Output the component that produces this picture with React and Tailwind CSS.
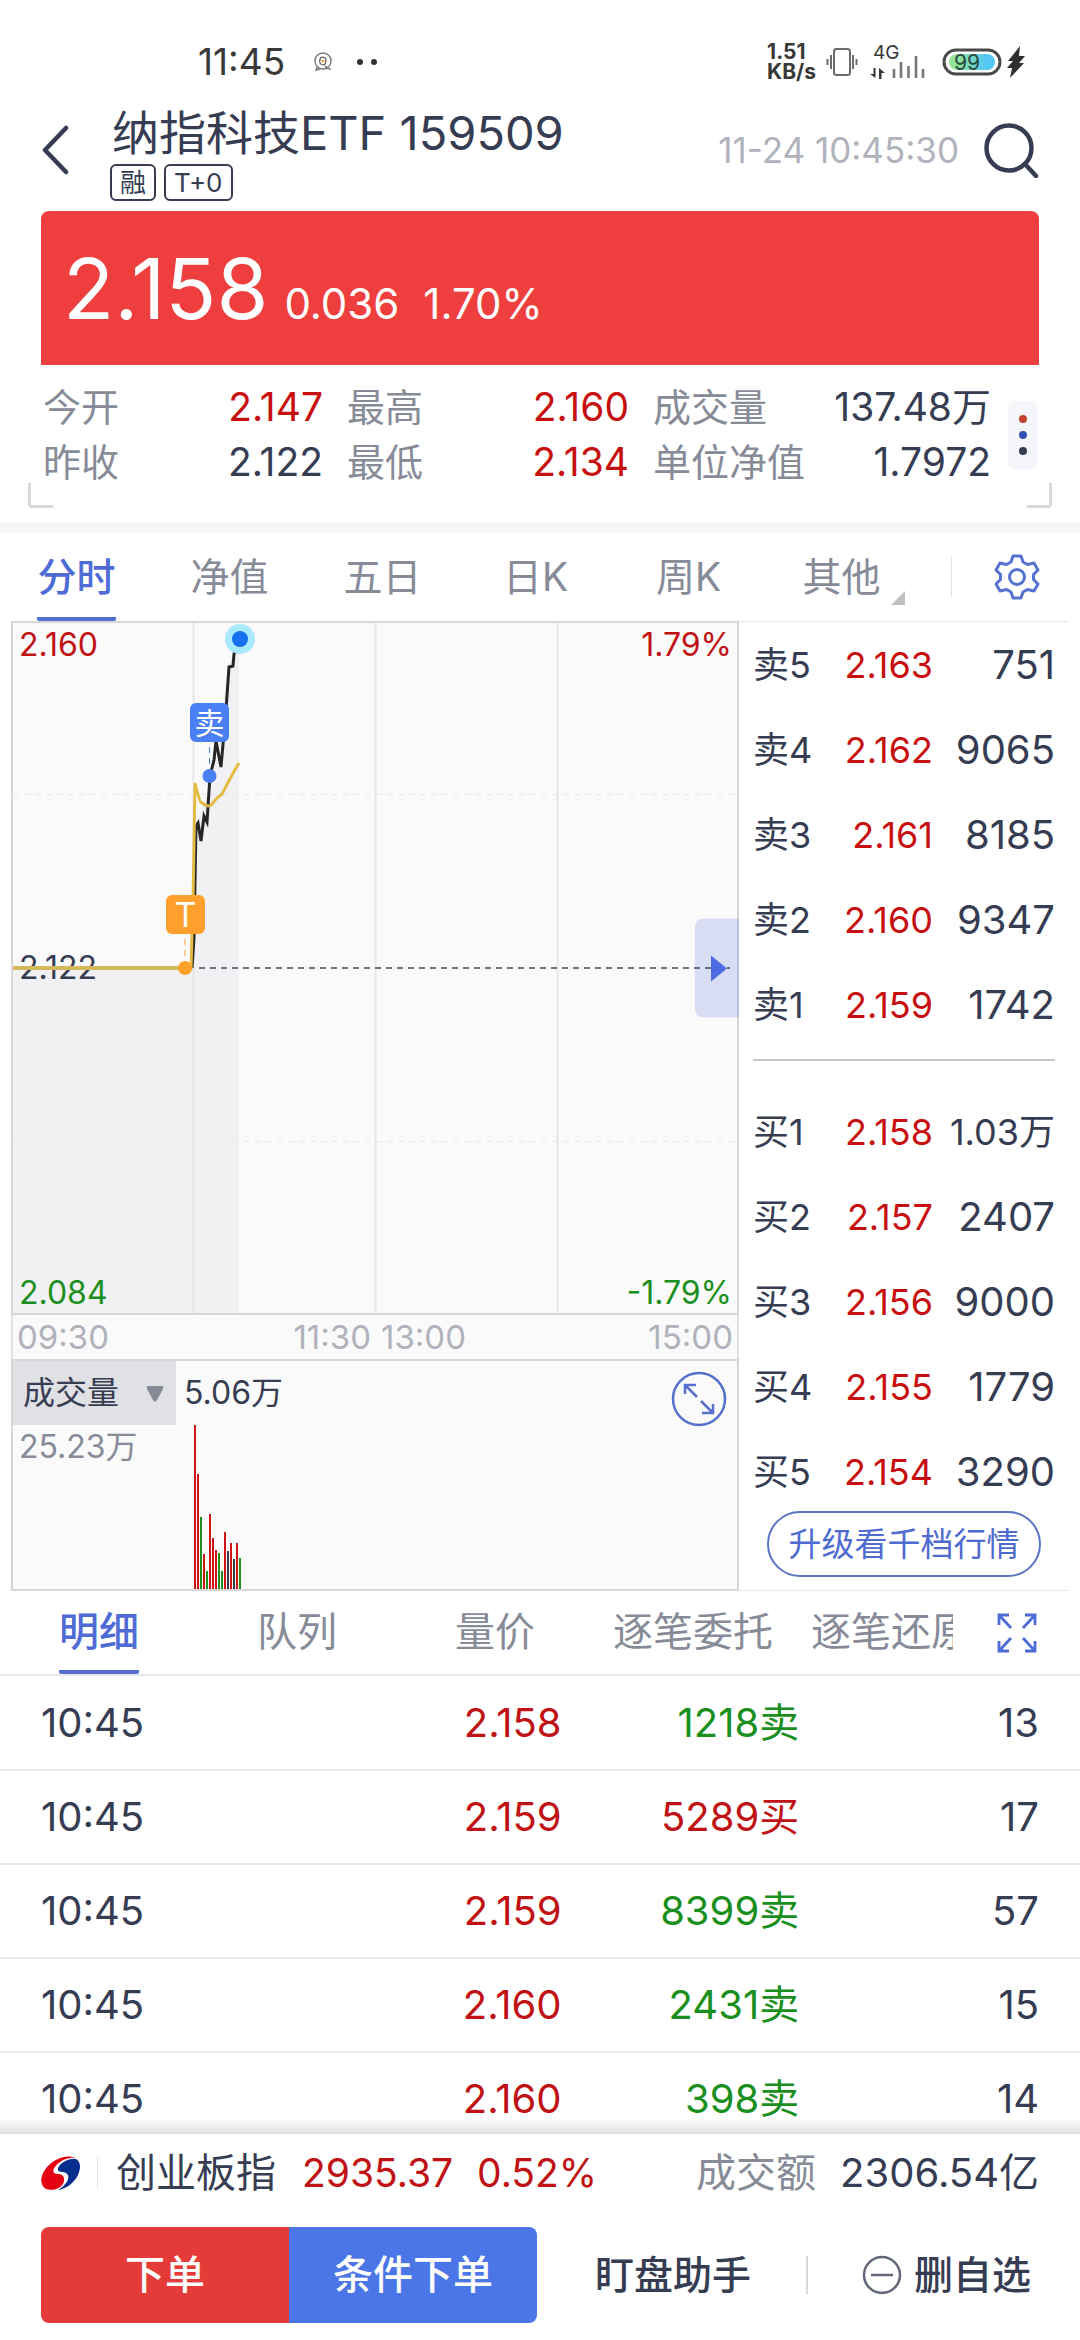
import React, { memo } from "react";

const stats = [
    { label: "今开", value: "2.147", tone: "text-[#c80f10]" },
    { label: "最高", value: "2.160", tone: "text-[#c80f10]" },
    { label: "成交量", value: "137.48万", tone: "text-[#363c52]" },
    { label: "昨收", value: "2.122", tone: "text-[#363c52]" },
    { label: "最低", value: "2.134", tone: "text-[#c80f10]" },
    { label: "单位净值", value: "1.7972", tone: "text-[#363c52]" },
];

const chartTabs = ["分时", "净值", "五日", "日K", "周K", "其他"];

const asks = [
    ["卖5", "2.163", "751"],
    ["卖4", "2.162", "9065"],
    ["卖3", "2.161", "8185"],
    ["卖2", "2.160", "9347"],
    ["卖1", "2.159", "1742"],
];

const bids = [
    ["买1", "2.158", "1.03万"],
    ["买2", "2.157", "2407"],
    ["买3", "2.156", "9000"],
    ["买4", "2.155", "1779"],
    ["买5", "2.154", "3290"],
];

const detailTabs = ["明细", "队列", "量价", "逐笔委托", "逐笔还原"];

const trades = [
    { time: "10:45", price: "2.158", deal: "1218卖", sell: true, count: 13 },
    { time: "10:45", price: "2.159", deal: "5289买", sell: false, count: 17 },
    { time: "10:45", price: "2.159", deal: "8399卖", sell: true, count: 57 },
    { time: "10:45", price: "2.160", deal: "2431卖", sell: true, count: 15 },
    { time: "10:45", price: "2.160", deal: "398卖", sell: true, count: 14 },
];

// [height, colour] for each minute
const volumes = [
    [164, "#d01515"],
    [115, "#d01515"],
    [72, "#1f8f1f"],
    [35, "#d01515"],
    [18, "#1f8f1f"],
    [75, "#d01515"],
    [51, "#d01515"],
    [39, "#d01515"],
    [36, "#1f8f1f"],
    [18, "#1f8f1f"],
    [57, "#d01515"],
    [38, "#363c52"],
    [46, "#d01515"],
    [30, "#363c52"],
    [46, "#d01515"],
    [31, "#1f8f1f"],
];

function StatusBar() {
    return (
        <div className="flex h-[100px] items-center justify-between pt-6 pr-[54px] pl-[198px] text-[#383838]">
            <div className="flex items-center">
                <span className="text-[37px] leading-10">11:45</span>
                <svg className="ml-7 h-5 w-5" viewBox="0 0 20 20" fill="none">
                    <circle cx="10" cy="9" r="8" stroke="#777" strokeWidth="1.4" />
                    <path d="M7 7c1-3 6-2 6 1s-1 5-3 5-4-2-3-6z" stroke="#555" strokeWidth="1.2" />
                    <circle cx="10" cy="9" r="1.5" fill="#e8a33c" />
                    <path d="M12 14c2 3 5 3 6 3M4 15l-1 3 4-1" stroke="#777" strokeWidth="1.4" />
                </svg>
                <svg className="ml-6 h-2 w-5" viewBox="0 0 20 8" fill="#333">
                    <circle cx="3" cy="4" r="3" />
                    <circle cx="17" cy="4" r="3" />
                </svg>
            </div>
            <div className="flex items-center">
                <div className="text-[21px] font-bold leading-5">
                    1.51
                    <br />
                    KB/s
                </div>
                <svg className="ml-[10px] h-[30px] w-8" viewBox="0 0 32 30" fill="none" stroke="#6b6b6b" strokeWidth="2">
                    <rect x="8" y="2" width="16" height="26" rx="2.5" />
                    <path d="M5 8v14M1.5 12v6M27 8v14M30.5 12v6" />
                </svg>
                <div className="relative ml-3 h-9 w-14">
                    <span className="absolute left-[3px] top-0 text-[19px] leading-[18px]">4G</span>
                    <svg className="absolute bottom-0 left-0 h-8 w-14" viewBox="0 0 56 32">
                        <path d="M5.500 20v10L0 26h3.500v-6zM9 31V20l6 5h-3.500v6z" fill="#333" />
                        <path d="M24 21v9M31 14v16M38.500 18v12M46 8v22M53 21v9" stroke="#777" strokeWidth="2.6" />
                    </svg>
                </div>
                <svg className="ml-4 h-7 w-[60px]" viewBox="0 0 60 28">
                    <defs>
                        <linearGradient id="battery">
                            <stop offset="0.2" stopColor="#93e29a" />
                            <stop offset="0.8" stopColor="#54c8f4" />
                        </linearGradient>
                    </defs>
                    <rect x="2" y="2" width="56" height="24" rx="12" fill="#fff" stroke="#4a4a4a" strokeWidth="3" />
                    <rect x="7" y="6" width="46" height="16" rx="8" fill="url(#battery)" />
                    <text x="12" y="21.500" fontSize="21" fill="#24483f" fontFamily="Inter">
                        99
                    </text>
                </svg>
                <svg className="ml-1 h-8 w-5" viewBox="0 0 20 32" fill="#2f2f2f">
                    <path d="M14 0 2 15h5L1 22h5L4 32 18 17h-5l6-7h-6z" />
                </svg>
            </div>
        </div>
    );
}

function Header() {
    return (
        <header className="flex h-[111px] items-start justify-between px-[41px]">
            <div className="flex items-start">
                <button type="button" aria-label="返回" className="mt-[25px]">
                    <svg
                        className="h-[50px] w-7"
                        viewBox="0 0 28 50"
                        fill="none"
                        stroke="#363c52"
                        strokeWidth="4.5"
                        strokeLinecap="round"
                        strokeLinejoin="round"
                    >
                        <path d="M25 3 4 25l21 22" />
                    </svg>
                </button>
                <div className="mt-[6px] ml-[41px] flex flex-col gap-1">
                    <h1 className="ml-[2px] text-[47px] leading-[54px] text-[#363c52]">纳指科技ETF 159509</h1>
                    <div className="flex gap-2 text-[26px] leading-[33px] text-[#363c52]">
                        <span className="rounded-md border-2 border-[#363c52] px-2">融</span>
                        <span className="rounded-md border-2 border-[#363c52] px-2">T+0</span>
                    </div>
                </div>
            </div>
            <div className="mt-[22px] flex items-center">
                <time className="text-[35px] leading-10 text-[#b0b2bc]">11-24 10:45:30</time>
                <button type="button" aria-label="搜索" className="ml-6">
                    <svg className="h-14 w-14" viewBox="0 0 56 56" fill="none" stroke="#363c52" strokeWidth="4.5">
                        <circle cx="26" cy="26" r="22.5" />
                        <path d="M42 42 53 54" strokeLinecap="round" />
                    </svg>
                </button>
            </div>
        </header>
    );
}

function Quote() {
    return (
        <section>
            <div className="mx-[41px] flex h-[154px] items-baseline rounded-t-lg bg-[#ee3f3e] pl-[22px] pt-[30px] text-white">
                <span className="text-[84px] leading-[96px]">2.158</span>
                <span className="ml-4 text-[42px]">0.036</span>
                <span className="ml-6 text-[42px]">1.70%</span>
            </div>
            <div className="flex h-[157px] flex-col justify-between px-7 pt-[15px] pb-[14px]">
                <div className="flex items-center justify-between pr-[14px] pl-[15px]">
                    <dl className="grid w-[948px] grid-cols-[280px_282px_1fr] gap-x-6">
                        {stats.map((s) => (
                            <div key={s.label} className="flex h-[55px] items-center justify-between">
                                <dt className="text-[38px] text-[#878b98]">{s.label}</dt>
                                <dd className={`text-[39px] ${s.tone}`}>{s.value}</dd>
                            </div>
                        ))}
                    </dl>
                    <button
                        type="button"
                        aria-label="更多"
                        className="flex h-[69px] w-[30px] flex-col items-center justify-center gap-2 rounded-lg bg-[#f5f6f9]"
                    >
                        <span className="h-2 w-2 rounded-full bg-[#c2432f]" />
                        <span className="h-2 w-2 rounded-full bg-[#3450b0]" />
                        <span className="h-2 w-2 rounded-full bg-[#363c52]" />
                    </button>
                </div>
                <div className="-mt-3 flex justify-between">
                    <span className="h-[25px] w-[25px] rounded-bl-sm border-b-3 border-l-3 border-[#d6d8de]" />
                    <span className="h-[25px] w-[25px] rounded-br-sm border-b-3 border-r-3 border-[#d6d8de]" />
                </div>
            </div>
        </section>
    );
}

function ChartTabs() {
    return (
        <nav className="flex h-[88px]">
            <div className="flex w-[85%] text-[39px] leading-[48px]">
                {chartTabs.map((tab, i) => (
                    <button
                        key={tab}
                        type="button"
                        className={`flex flex-1 justify-center ${i === 0 ? "font-medium text-[#4f6bd6]" : "text-[#878b98]"}`}
                    >
                        <span
                            className={`relative flex h-full items-center border-b-4 pt-[3px] ${i === 0 ? "rounded-b-xs border-[#526fcf]" : "border-transparent"}`}
                        >
                            {tab}
                            {i === 5 && (
                                <svg className="absolute -right-6 bottom-3 h-[14px] w-[14px]" viewBox="0 0 14 14" fill="#bfbfbf">
                                    <path d="M14 0v14H0z" />
                                </svg>
                            )}
                        </span>
                    </button>
                ))}
            </div>
            <div className="flex flex-1 items-center justify-end pr-10">
                <span className="h-10 w-px bg-[#e4e5e9]" />
                <button type="button" aria-label="设置" className="ml-[42px]">
                    <svg
                        className="h-[46px] w-[46px]"
                        viewBox="0 0 46 46"
                        fill="none"
                        stroke="#5673d2"
                        strokeWidth="3"
                        strokeLinejoin="round"
                    >
                        <path d="M19 2h8l2 6 4.500 2.500 6.500-1.500 4 7-4.500 4.500v5L44 30l-4 7-6.500-1.500L29 38l-2 6h-8l-2-6-4.500-2.500L6 37l-4-7 4.500-4.500v-5L2 16l4-7 6.500 1.500L17 8z" />
                        <circle cx="23" cy="23" r="7.5" />
                    </svg>
                </button>
            </div>
        </nav>
    );
}

function PriceChart() {
    return (
        <div className="relative border-2 border-[#d6d7da] bg-[#fafafa] text-[32px] leading-10">
            <svg className="block w-full" viewBox="0 0 724 690" fill="none">
                <path d="M0 345H180L184 200 200 150 215 44 226 16V690H0z" fill="#f1f1f4" />
                <path d="M180.500 0V690M362.500 0V690M544.500 0V690" stroke="#e6e6e8" strokeWidth="2" />
                <path d="M0 171.500H723M0 518.500H723" stroke="#e9e9eb" strokeDasharray="6 5" />
                <path d="M186 345H717" stroke="#6d7180" strokeWidth="2" strokeDasharray="6 5" />
            </svg>
            <span className="absolute left-[6px] top-[2px] text-[#c01214]">2.160</span>
            <span className="absolute right-[5px] top-[2px] text-[#c01214]">1.79%</span>
            <span className="absolute left-[6px] top-1/2 -translate-y-1/2 text-[#363c52]">2.122</span>
            <span className="absolute bottom-0 left-[6px] text-[#1a8f1d]">2.084</span>
            <span className="absolute bottom-0 right-[5px] text-[#1a8f1d]">-1.79%</span>
            <svg className="absolute inset-0 w-full" viewBox="0 0 724 690" fill="none">
                <path
                    d="M179 345 181 315 183 203 185 200 188 218 191 193 194 199 197 153 201 137 203 118 208 144 213 87 216 44 220 43 221 31 226 15"
                    stroke="#262626"
                    strokeWidth="3"
                />
                <path
                    d="M0 345H178L180 280 182 160C184 168 187 180 189 180 194 184 196 183 198 182L204 175 209 171 219 152 226 140"
                    stroke="#e2ba44"
                    strokeWidth="3"
                />
                <path d="M0 345H172" stroke="#d5b85c" strokeWidth="4" />
                <path d="M172 316V340" stroke="#ff9f2e" strokeDasharray="6 5" />
                <path d="M196.500 124V150" stroke="#4a7cf0" strokeDasharray="6 5" />
                <circle cx="172" cy="345" r="7" fill="#ff9f2c" />
                <circle cx="196.500" cy="153" r="7" fill="#4b7ff5" />
                <circle cx="227" cy="16" r="15" fill="#aae8fd" />
                <circle cx="227" cy="16" r="8" fill="#186ff0" />
            </svg>
            <span className="absolute left-[153px] top-[272px] flex h-[39px] w-[39px] items-center justify-center rounded-md bg-[#ff9f2c] text-[34px] text-white">
                T
            </span>
            <span className="absolute left-[177px] top-[80px] flex h-[39px] w-[39px] items-center justify-center rounded-md bg-[#4b7ff5] text-[30px] text-white">
                卖
            </span>
            <button
                type="button"
                aria-label="展开"
                className="absolute right-[-2px] top-1/2 flex h-[99px] w-11 -translate-y-1/2 items-center justify-center rounded-l-lg bg-[#4f6bd6]/20"
            >
                <svg className="ml-1 h-[30px] w-[18px]" viewBox="0 0 18 30" fill="#4e6ae0">
                    <path d="M1 2v26l16-13z" />
                </svg>
            </button>
        </div>
    );
}

function VolumeChart() {
    return (
        <div className="flex h-[232px] flex-col border-2 border-[#d6d7da] bg-[#fafafa]">
            <div className="flex h-16 items-center">
                <div className="relative h-full w-[163px]">
                    <select
                        aria-label="指标"
                        className="h-full w-full appearance-none bg-[#e0e1e5] pl-[10px] text-[32px] text-[#363c52]"
                    >
                        <option>成交量</option>
                    </select>
                    <svg
                        className="pointer-events-none absolute right-3 top-[25px] h-4 w-[18px]"
                        viewBox="0 0 18 16"
                        fill="#878b98"
                    >
                        <path d="M2 0h14q2 0 1 3l-6 11q-2 3-4 0L1 3Q0 0 2 0z" />
                    </svg>
                </div>
                <span className="ml-2 text-[32px] text-[#363c52]">5.06万</span>
                <button type="button" aria-label="全屏" className="mr-[10px] ml-auto mt-3">
                    <svg className="h-14 w-14" viewBox="0 0 56 56" fill="none" stroke="#5470cc" strokeWidth="2.5">
                        <circle cx="28" cy="28" r="26" />
                        <path d="M14 23V14h11M14.500 14.500 26 26M42 33v9H31M41.500 41.500 30 30" />
                    </svg>
                </button>
            </div>
            <div className="relative flex-1">
                <span className="absolute left-[6px] top-[2px] text-[32px] leading-10 text-[#878b98]">25.23万</span>
                <svg className="block w-full" viewBox="0 0 724 164">
                    {volumes.map(([h, color], i) => (
                        <rect key={i} x={181 + i * 3} y={164 - h} width="2" height={h} fill={color} />
                    ))}
                </svg>
            </div>
        </div>
    );
}

function BookSide({ rows, name }) {
    return (
        <table aria-label={name} className="w-full table-fixed text-[36px] text-[#363c52]">
            <colgroup>
                <col className="w-[62px]" />
                <col />
                <col className="w-[122px]" />
            </colgroup>
            <tbody>
                {rows.map(([label, price, qty]) => (
                    <tr key={label} className="h-[85px]">
                        <th scope="row" className="p-0 text-left font-normal whitespace-nowrap">
                            {label}
                        </th>
                        <td className="p-0 text-right text-[#c80f10]">{price}</td>
                        <td className={`p-0 text-right whitespace-nowrap ${qty.includes("万") ? "" : "text-[40px]"}`}>
                            {qty}
                        </td>
                    </tr>
                ))}
            </tbody>
        </table>
    );
}

function ChartPanel() {
    return (
        <section className="flex pl-[11px]">
            <div className="w-[728px] shrink-0">
                <PriceChart />
                <div className="grid h-11 grid-cols-4 items-center border-x-2 border-[#e0e1e4] bg-[#fafafa] px-1 text-[33px] leading-10 text-[#b0b2bb]">
                    <span>09:30</span>
                    <span className="pr-1 text-right">11:30</span>
                    <span className="pl-[6px]">13:00</span>
                    <span className="text-right">15:00</span>
                </div>
                <VolumeChart />
            </div>
            <div className="mr-[11px] flex flex-1 flex-col border-y border-[#e8e8ea] px-[14px]">
                <BookSide rows={asks} name="卖盘" />
                <hr className="mt-3 mb-[28px] border-t-2 border-[#c4c5ca]" />
                <BookSide rows={bids} name="买盘" />
                <button
                    type="button"
                    className="mx-[14px] -mt-[3px] h-[66px] rounded-full border-2 border-[#5a75c4] text-[33px] leading-10 whitespace-nowrap text-[#4f6bd0]"
                >
                    升级看千档行情
                </button>
            </div>
        </section>
    );
}

function Details() {
    return (
        <section className="flex min-h-0 flex-1 flex-col overflow-hidden">
            <nav className="flex h-[85px] shrink-0 border-b-2 border-[#e8e8ea]">
                <div className="flex w-[953px] overflow-hidden text-[40px] leading-[48px]">
                    {detailTabs.map((tab, i) => (
                        <button
                            key={tab}
                            type="button"
                            className={`flex w-[198px] shrink-0 justify-center whitespace-nowrap ${i === 0 ? "font-medium text-[#4f6bd6]" : "text-[#878b98]"}`}
                        >
                            <span
                                className={`flex h-full items-center border-b-4 pt-[3px] ${i === 0 ? "rounded-b-xs border-[#526fcf]" : "border-transparent"}`}
                            >
                                {tab}
                            </span>
                        </button>
                    ))}
                </div>
                <button type="button" aria-label="放大" className="ml-auto pr-[43px]">
                    <svg className="h-10 w-10" viewBox="0 0 40 40" fill="none" stroke="#4f6bd6" strokeWidth="2.8">
                        <path d="M2 12V2h10M2 2l12 13M28 2h10v10M38 2 26 15M2 28v10h10M2 38l12-13M28 38h10V28M38 38 26 25" />
                    </svg>
                </button>
            </nav>
            <table className="w-full table-fixed text-[40px] text-[#363c52]">
                <tbody>
                    {trades.map((t, i) => (
                        <tr key={i} className="h-[94px] border-b-2 border-[#e8e8ea]">
                            <td className="w-[22%] p-0 pl-[41px]">{t.time}</td>
                            <td className="w-[30%] p-0 text-right text-[#c01214]">{t.price}</td>
                            <td className={`w-[22%] p-0 text-right ${t.sell ? "text-[#1a8f1d]" : "text-[#c01214]"}`}>{t.deal}</td>
                            <td className="p-0 pr-[41px] text-right">{t.count}</td>
                        </tr>
                    ))}
                </tbody>
            </table>
        </section>
    );
}

function BottomBar() {
    return (
        <footer className="relative h-[206px] shrink-0 bg-white px-[41px]">
            <div className="absolute inset-x-0 -top-[14px] h-[14px] bg-gradient-to-b from-black/2 to-black/12" />
            <div className="flex h-[78px] items-center text-[40px] whitespace-nowrap text-[#363c52]">
                <svg className="h-9 w-10" viewBox="0 0 40 36">
                    <path
                        d="M34 3C27-1 14 3 6 12-2 21-1 31 5 34c6 2 14 0 17-5 3-6 0-10-5-10-5 0-6-3-3-7C18 6 27 2 34 3z"
                        fill="#e50012"
                    />
                    <path
                        d="M35 4C28 3 19 8 17 13c-1 3 2 4 5 4 6 1 7 6 3 11-2 3-5 5-8 7 8-1 16-7 20-15 3-7 3-13-2-16z"
                        fill="#072e8c"
                    />
                </svg>
                <span className="ml-4 h-8 w-px bg-[#e4e5e9]" />
                <span className="ml-[18px]">创业板指</span>
                <span className="ml-[26px] text-[39px] text-[#c01214]">2935.37</span>
                <span className="ml-6 text-[39px] text-[#c01214]">0.52%</span>
                <span className="ml-auto text-[#878b98]">成交额</span>
                <span className="ml-6">2306.54亿</span>
            </div>
            <div className="mt-[15px] flex h-[96px] items-center text-[39px] whitespace-nowrap text-[#363c52]">
                <div className="flex h-full w-[496px] overflow-hidden rounded-lg text-[40px] font-medium text-white">
                    <button type="button" className="flex-1 bg-[#e43b39]">
                        下单
                    </button>
                    <button type="button" className="flex-1 bg-[#4b76e7]">
                        条件下单
                    </button>
                </div>
                <div className="flex flex-1 items-center justify-between pr-2 pl-[58px]">
                    <button type="button" className="font-medium">
                        盯盘助手
                    </button>
                    <span className="h-[38px] w-[2px] bg-[#d6d7dc]" />
                    <button type="button" className="flex items-center gap-3 font-medium">
                        <svg className="h-10 w-10" viewBox="0 0 40 40" fill="none" stroke="#62677a" strokeWidth="2.5">
                            <circle cx="20" cy="20" r="18" />
                            <path d="M9 20h22" />
                        </svg>
                        删自选
                    </button>
                </div>
            </div>
        </footer>
    );
}

function App() {
    return (
        <div className="flex h-screen flex-col overflow-hidden bg-white font-['Inter','Noto_Sans_CJK_SC',sans-serif]">
            <StatusBar />
            <Header />
            <Quote />
            <div className="h-[11px] shrink-0 bg-[#f6f6f9]" />
            <ChartTabs />
            <ChartPanel />
            <Details />
            <BottomBar />
        </div>
    );
}

export default memo(App);
